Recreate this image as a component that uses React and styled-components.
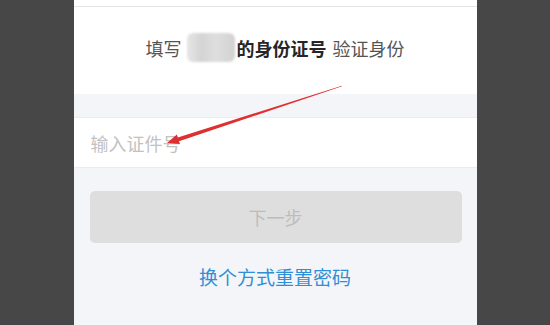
import React from 'react';
import styled, { createGlobalStyle } from 'styled-components';

const GlobalStyle = createGlobalStyle`
  html, body {
    margin: 0;
    padding: 0;
    background: #474747;
  }
  * {
    box-sizing: border-box;
  }
`;

const Page = styled.div`
  position: relative;
  width: 550px;
  height: 325px;
  display: flex;
  justify-content: center;
  overflow: hidden;
  font-family: "Noto Sans CJK SC", "Noto Sans", sans-serif;
`;

const Panel = styled.div`
  width: 403px;
  height: 325px;
  background: #f4f5f8;
  display: flex;
  flex-direction: column;
`;

const TopStrip = styled.div`
  height: 7px;
  background: #fff;
  border-bottom: 1px solid #e4e4e6;
`;

const Header = styled.div`
  height: 87px;
  background: #fff;
  display: flex;
  align-items: center;
  justify-content: center;
  padding-bottom: 6px;
  font-size: 18px;
  color: #555;
  white-space: nowrap;
`;

const Bold = styled.span`
  font-weight: 700;
  color: #262626;
`;

const Blurred = styled.span`
  display: inline-block;
  width: 48px;
  height: 29px;
  margin: 0 2px 0 5px;
  border-radius: 6px;
  background: linear-gradient(90deg, #e6e6e6 0%, #d4d4d4 30%, #dedede 60%, #d2d2d2 100%);
  filter: blur(0.8px);
`;

const Gap = styled.span`
  display: inline-block;
  width: ${p => p.w}px;
`;

const Band = styled.div`
  height: 24px;
  border-bottom: 1px solid #ececef;
`;

const InputRow = styled.div`
  height: 50px;
  background: #fff;
  display: flex;
  align-items: center;
  padding-left: 17px;
  border-bottom: 1px solid #ececef;
`;

const IdInput = styled.input`
  border: none;
  outline: none;
  background: transparent;
  width: 100%;
  font-family: inherit;
  font-size: 18px;
  color: #333;
  padding: 0;
  &::placeholder {
    color: #c2c2c2;
  }
`;

const NextButton = styled.button`
  margin: 23px 15px 0 16px;
  height: 52px;
  border: none;
  border-radius: 5px;
  background: #dedede;
  color: #bcbcbc;
  font-family: inherit;
  font-size: 18px;
`;

const Link = styled.a`
  margin-top: 22px;
  text-align: center;
  line-height: 24px;
  font-size: 19px;
  color: #2f8fd6;
  text-decoration: none;
`;

const Arrow = styled.svg`
  position: absolute;
  left: 0;
  top: 0;
  pointer-events: none;
`;

export default function App() {
  return (
    <Page>
      <GlobalStyle />
      <Panel>
        <TopStrip />
        <Header>
          填写<Blurred /><Bold>的身份证号</Bold><Gap w={6} />验证身份
        </Header>
        <Band />
        <InputRow>
          <IdInput placeholder="输入证件号" />
        </InputRow>
        <NextButton disabled>下一步</NextButton>
        <Link href="#">换个方式重置密码</Link>
      </Panel>
      <Arrow width="550" height="325" viewBox="0 0 550 325">
        <polygon
          points="342.1,86.3 341.9,85.7 177.8,137.4 176.85,134.55 167,143 179.95,144.06 179.0,141.2"
          fill="#e02f2f"
        />
      </Arrow>
    </Page>
  );
}
